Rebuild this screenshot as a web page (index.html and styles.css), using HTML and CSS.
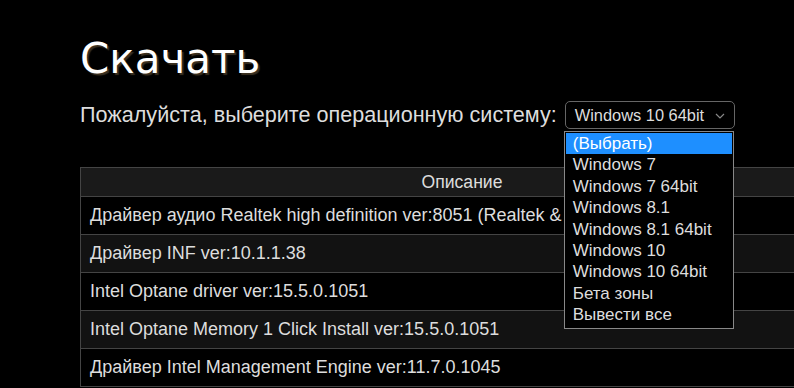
FILE: index.html
```html
<!DOCTYPE html>
<html lang="ru">
<head>
  <meta charset="UTF-8">
  <title>Скачать</title>
  <link rel="stylesheet" href="styles.css">
</head>
<body>

<div class="page">
  <h1 class="title">Скачать</h1>

  <div class="os-row">
    <span class="os-label">Пожалуйста, выберите операционную систему:</span>
    <div class="os-select">
      <div class="select-box">
        <span>Windows 10 64bit</span>
        <svg class="chevron" width="10" height="6" viewBox="0 0 10 6"><path d="M1 1 L5 5 L9 1" fill="none" stroke="#888" stroke-width="1.2"/></svg>
      </div>
      <ul class="select-list">
        <li class="active">(Выбрать)</li>
        <li>Windows 7</li>
        <li>Windows 7 64bit</li>
        <li>Windows 8.1</li>
        <li>Windows 8.1 64bit</li>
        <li>Windows 10</li>
        <li>Windows 10 64bit</li>
        <li>Бета зоны</li>
        <li>Вывести все</li>
      </ul>
    </div>
  </div>

  <table class="drivers">
    <thead>
      <tr><th>Описание</th></tr>
    </thead>
    <tbody>
      <tr><td>Драйвер аудио Realtek high definition ver:8051 (Realtek &amp; Nahimic)</td></tr>
      <tr><td>Драйвер INF ver:10.1.1.38</td></tr>
      <tr><td>Intel Optane driver ver:15.5.0.1051</td></tr>
      <tr><td>Intel Optane Memory 1 Click Install ver:15.5.0.1051</td></tr>
      <tr><td>Драйвер Intel Management Engine ver:11.7.0.1045</td></tr>
    </tbody>
  </table>
</div>

</body>
</html>
```

FILE: styles.css
```css
html {
  overflow: hidden;
}
body {
  margin: 0;
  background: #000;
  color: #ddd;
  font-family: "Liberation Sans", Arial, sans-serif;
}
.page {
  padding: 0 0 0 80px;
}
.title {
  margin: 0;
  padding-top: 31px;
  font-family: "DejaVu Sans", Verdana, sans-serif;
  font-weight: normal;
  font-size: 42px;
  line-height: 56px;
  color: #fff;
  text-shadow: 2px 2px 1px #3b3020;
}
.os-row {
  display: flex;
  align-items: center;
  gap: 8px;
  margin-top: 14px;
}
.os-label {
  font-size: 21.6px;
}
.os-select {
  position: relative;
}
.select-box {
  width: 170px;
  height: 28px;
  box-sizing: border-box;
  border: 1px solid #666;
  border-radius: 5px;
  padding: 0 9px 0 9px;
  display: flex;
  align-items: center;
  justify-content: space-between;
  font-size: 16.4px;
  color: #ddd;
}
.chevron {
  margin-top: 1px;
}
.select-list {
  position: absolute;
  top: 30px;
  left: -1px;
  width: 170px;
  margin: 0;
  padding: 1px 0 2px;
  list-style: none;
  background: #000;
  border: 1px solid #888;
  box-sizing: border-box;
  z-index: 2;
}
.select-list li {
  height: 21.4px;
  line-height: 21px;
  padding-left: 8px;
  font-size: 17px;
  color: #ddd;
}
.select-list li.active {
  background: #1e8fff;
  color: #fff;
  margin: 0 1px;
  padding-left: 7px;
}
.drivers {
  width: 764px;
  margin-top: 38px;
  border-collapse: collapse;
  font-size: 18px;
}
.drivers th {
  height: 28px;
  padding: 0;
  font-weight: normal;
  font-size: 17.6px;
  background: #1a1a1a;
  border: 1px solid #444;
}
.drivers td {
  height: 37px;
  padding: 0 9px;
  border: 1px solid #444;
  white-space: nowrap;
}
.drivers tbody tr:nth-child(even) {
  background: #121212;
}
```
